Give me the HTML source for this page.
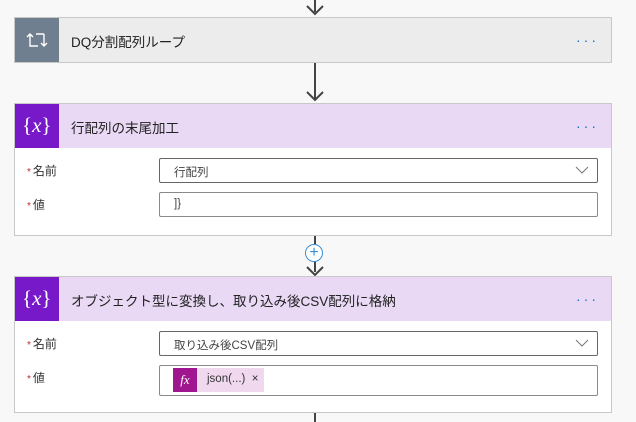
<!DOCTYPE html>
<html><head><meta charset="utf-8"><style>
body{margin:0;width:636px;height:422px;background:#f8f8f8;position:relative;overflow:hidden;font-family:"Liberation Sans","Noto Sans CJK JP",sans-serif;color:#333}
.a{position:absolute}
.line{position:absolute;left:314px;width:2px;background:#444}
.card{position:absolute;left:14px;width:598px;border:1px solid #c8c8c8;background:#fff;box-sizing:border-box}
.hd{height:44px;position:relative}
.ic{position:absolute;left:0;top:0;width:44px;height:44px;color:#fff}
.title{position:absolute;left:56px;top:13px;font-size:13.5px;color:#222}
.dots{position:absolute;right:12px;top:14px;color:#0a6fc4;font-size:14px;letter-spacing:3px}
.lbl{position:absolute;left:12px;font-size:12px;color:#333}
.lbl b{color:#c4262e;font-weight:normal;font-size:10px;margin-right:2px}
.inp{position:absolute;left:144px;width:439px;height:25px;border:1px solid #8a8a8a;box-sizing:border-box;font-size:11.5px;color:#444;padding:5px 0 0 14px;border-radius:2px}
.chev{position:absolute;right:8px;top:6px}
.x{font-family:'Liberation Serif',serif;font-size:21px;position:absolute;left:7px;top:9px}
</style></head><body>
<div class="line" style="top:0;height:12px"></div>
<svg class="a" style="left:306px;top:4px" width="18" height="12"><path d="M1 2 L9 10 L17 2" stroke="#444" stroke-width="2" fill="none"/></svg>

<div class="card" style="top:17px;height:46px;background:#ececec">
 <div class="hd">
  <div class="ic" style="background:#6f7f8f"><svg width="44" height="44"><path d="M15 16 L15 28 L23 28 M12 19 L15 16 L18 19 M29 16 L21 16 M29 16 L29 28 M26 25 L29 28 L32 25" stroke="#fff" stroke-width="1.4" fill="none"/></svg></div>
  <div class="title">DQ分割配列ループ</div><div class="dots">···</div>
 </div>
</div>
<div class="line" style="top:63px;height:36px"></div>
<svg class="a" style="left:306px;top:90px" width="18" height="12"><path d="M1 2 L9 10 L17 2" stroke="#444" stroke-width="2" fill="none"/></svg>

<div class="card" style="top:103px;height:133px">
 <div class="hd" style="background:#e9d9f5">
  <div class="ic" style="background:#7719c8"><div class="x">{<i>x</i>}</div></div>
  <div class="title">行配列の末尾加工</div><div class="dots">···</div>
 </div>
 <div class="lbl" style="top:58px"><b>*</b>名前</div>
 <div class="inp" style="top:54px;border-color:#666">行配列<svg class="chev" width="14" height="10"><path d="M1 2 L7 8 L13 2" stroke="#777" fill="none"/></svg></div>
 <div class="lbl" style="top:92px"><b>*</b>値</div>
 <div class="inp" style="top:88px">]}</div>
</div>
<div class="line" style="top:236px;height:36px"></div>
<div class="a" style="left:305px;top:244px;width:18px;height:18px;border:1px solid #3b8fd6;border-radius:50%;background:#fff;box-sizing:border-box;color:#3b8fd6;font-size:16px;line-height:15px;text-align:center">+</div>
<svg class="a" style="left:306px;top:265px" width="18" height="12"><path d="M1 2 L9 10 L17 2" stroke="#444" stroke-width="2" fill="none"/></svg>

<div class="card" style="top:276px;height:137px">
 <div class="hd" style="background:#e9d9f5">
  <div class="ic" style="background:#7719c8"><div class="x">{<i>x</i>}</div></div>
  <div class="title">オブジェクト型に変換し、取り込み後CSV配列に格納</div><div class="dots">···</div>
 </div>
 <div class="lbl" style="top:58px"><b>*</b>名前</div>
 <div class="inp" style="top:54px;border-color:#666">取り込み後CSV配列<svg class="chev" width="14" height="10"><path d="M1 2 L7 8 L13 2" stroke="#777" fill="none"/></svg></div>
 <div class="lbl" style="top:92px"><b>*</b>値</div>
 <div class="inp" style="top:88px;height:31px;padding:0">
  <div class="a" style="left:13px;top:2px;width:91px;height:24px;background:#f0d9ef"></div>
  <div class="a" style="left:13px;top:2px;width:24px;height:24px;background:#a0168e;color:#fff;font-family:'Liberation Serif',serif;font-style:italic;font-size:13px;text-align:center;line-height:24px">fx</div>
  <div class="a" style="left:47px;top:7px;font-size:11.5px;color:#333">json(...) &nbsp;×</div>
 </div>
</div>
<div class="line" style="top:413px;height:9px"></div>
</body></html>
